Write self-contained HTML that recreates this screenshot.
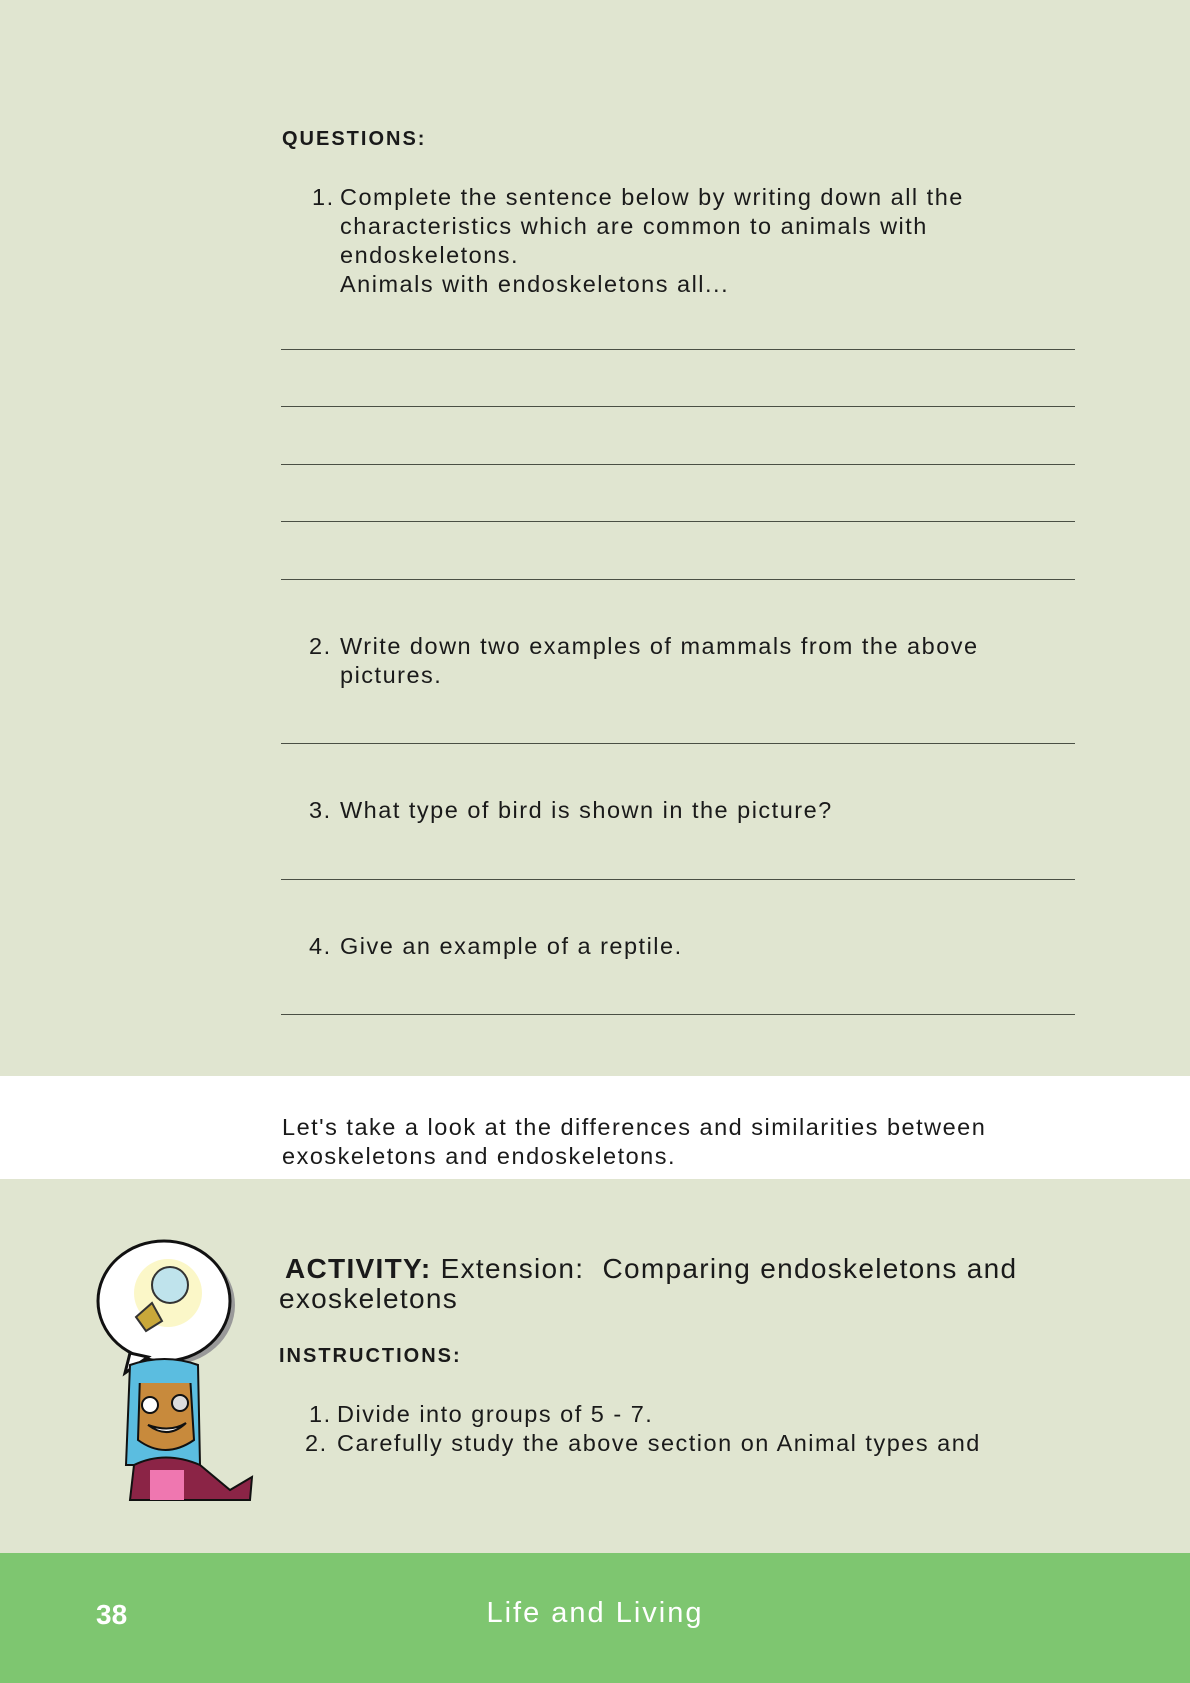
<!DOCTYPE html>
<html><head><meta charset="utf-8"><style>
*{margin:0;padding:0;box-sizing:border-box}
body{width:1190px;height:1683px;background:#e0e5d0;font-family:"Liberation Sans",sans-serif;color:#1a1a1a;position:relative;overflow:hidden}
.a{position:absolute;white-space:nowrap}
.t{font-size:23.5px;letter-spacing:1.5px;line-height:29px}
.ln{position:absolute;left:281px;width:794px;height:1px;background:#4a4f44}
.b{font-weight:bold}
</style></head><body>
<div class="a b" style="left:282px;top:128px;font-size:20px;letter-spacing:2px">QUESTIONS:</div>
<div class="a t" style="left:312px;top:183px">1.</div>
<div class="a t" style="left:340px;top:183px">Complete the sentence below by writing down all the<br>characteristics which are common to animals with<br>endoskeletons.<br>Animals with endoskeletons all...</div>
<div class="ln" style="top:349px"></div>
<div class="ln" style="top:406px"></div>
<div class="ln" style="top:464px"></div>
<div class="ln" style="top:521px"></div>
<div class="ln" style="top:579px"></div>
<div class="a t" style="left:309px;top:632px">2.</div>
<div class="a t" style="left:340px;top:632px">Write down two examples of mammals from the above<br>pictures.</div>
<div class="ln" style="top:743px"></div>
<div class="a t" style="left:309px;top:796px">3.</div>
<div class="a t" style="left:340px;top:796px">What type of bird is shown in the picture?</div>
<div class="ln" style="top:879px"></div>
<div class="a t" style="left:309px;top:932px">4.</div>
<div class="a t" style="left:340px;top:932px">Give an example of a reptile.</div>
<div class="ln" style="top:1014px"></div>
<div style="position:absolute;left:0;top:1076px;width:1190px;height:103px;background:#fff"></div>
<div class="a t" style="left:282px;top:1113px">Let's take a look at the differences and similarities between<br>exoskeletons and endoskeletons.</div>
<div class="a" style="left:285px;top:1254px;font-size:28px;letter-spacing:1.3px;line-height:29px"><b>ACTIVITY:</b> Extension:&nbsp; Comparing endoskeletons and</div>
<div class="a" style="left:279px;top:1284px;font-size:28px;letter-spacing:1.3px;line-height:29px">exoskeletons</div>
<div class="a b" style="left:279px;top:1345px;font-size:20px;letter-spacing:2px">INSTRUCTIONS:</div>
<div class="a t" style="left:309px;top:1400px">1.</div>
<div class="a t" style="left:337px;top:1400px">Divide into groups of 5 - 7.</div>
<div class="a t" style="left:305px;top:1429px">2.</div>
<div class="a t" style="left:337px;top:1429px">Carefully study the above section on Animal types and</div>
<svg class="a" style="left:90px;top:1225px" width="170" height="280" viewBox="0 0 170 280">
<ellipse cx="79" cy="80" rx="66" ry="60" fill="#999"/>
<ellipse cx="74" cy="76" rx="66" ry="60" fill="#fff" stroke="#111" stroke-width="3"/>
<path d="M40 128 L35 148 L58 132 Z" fill="#fff" stroke="#111" stroke-width="3"/>
<circle cx="78" cy="68" r="34" fill="#fbf7c8"/>
<circle cx="80" cy="60" r="18" fill="#bfe3ec" stroke="#333" stroke-width="2"/>
<path d="M62 78 L72 96 L56 106 L46 92 Z" fill="#c9a83a" stroke="#333" stroke-width="2"/>
<path d="M40 140 Q75 128 108 140 L110 240 L36 240 Z" fill="#5bbde0" stroke="#111" stroke-width="2"/>
<path d="M50 150 L100 150 L104 215 Q75 235 48 215 Z" fill="#c88a3c" stroke="#111" stroke-width="2"/>
<rect x="42" y="142" width="64" height="16" fill="#5bbde0"/>
<circle cx="60" cy="180" r="8" fill="#fff" stroke="#111" stroke-width="2"/>
<circle cx="90" cy="178" r="8" fill="#ddd" stroke="#111" stroke-width="2"/>
<path d="M58 200 Q78 215 96 198 Q80 208 58 200Z" fill="#fff" stroke="#111" stroke-width="2"/>
<path d="M40 275 L44 240 Q75 225 110 240 L140 265 L162 252 L160 275 Z" fill="#8b2446" stroke="#111" stroke-width="2"/>
<rect x="60" y="245" width="34" height="30" fill="#ef77b0"/>
</svg>
<div style="position:absolute;left:0;top:1553px;width:1190px;height:130px;background:#7ec670"></div>
<div class="a b" style="left:96px;top:1599px;font-size:28px;color:#fff">38</div>
<div class="a" style="left:0;width:1190px;text-align:center;top:1597px;font-size:29px;color:#fff;letter-spacing:2px">Life and Living</div>
</body></html>
